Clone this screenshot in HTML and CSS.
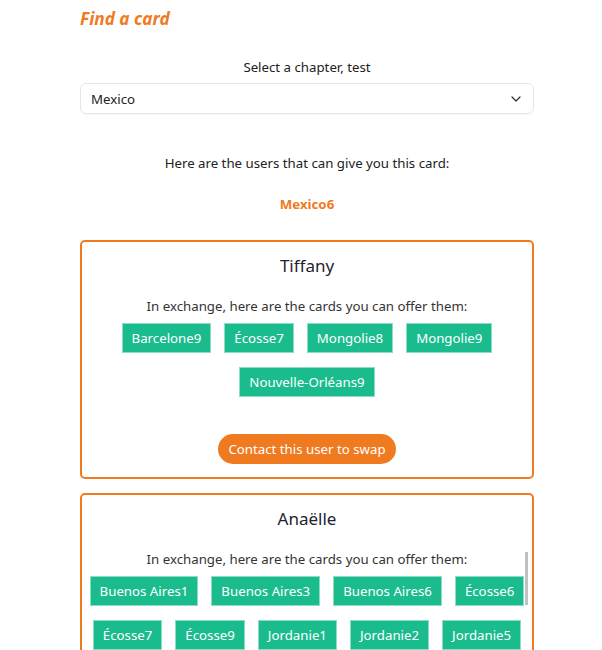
FILE: index.html
```html
<!DOCTYPE html>
<html lang="en">
<head>
<meta charset="utf-8">
<title>Find a card</title>
<link rel="stylesheet" href="styles.css">
</head>
<body>
<main class="page">
  <h1 class="title">Find a card</h1>
  <label class="label" for="chapter">Select a chapter, test</label>
  <div class="select">
    <span class="select-value">Mexico</span>
    <svg class="chevron" width="10" height="6" viewBox="0 0 10 6"><path d="M1 1l4 4 4-4" fill="none" stroke="#333" stroke-width="1.3" stroke-linecap="round" stroke-linejoin="round"/></svg>
  </div>
  <p class="intro">Here are the users that can give you this card:</p>
  <p class="card-name">Mexico6</p>

  <section class="user">
    <h2 class="user-name">Tiffany</h2>
    <div class="offers">
      <p class="offer-text">In exchange, here are the cards you can offer them:</p>
      <div class="chips">
        <span class="chip">Barcelone9</span>
        <span class="chip">Écosse7</span>
        <span class="chip">Mongolie8</span>
        <span class="chip">Mongolie9</span>
        <span class="chip">Nouvelle-Orléans9</span>
      </div>
    </div>
    <button class="contact">Contact this user to swap</button>
  </section>

  <section class="user">
    <h2 class="user-name">Anaëlle</h2>
    <div class="offers">
      <p class="offer-text">In exchange, here are the cards you can offer them:</p>
      <div class="chips">
        <span class="chip">Buenos Aires1</span>
        <span class="chip">Buenos Aires3</span>
        <span class="chip">Buenos Aires6</span>
        <span class="chip">Écosse6</span>
        <span class="chip">Écosse7</span>
        <span class="chip">Écosse9</span>
        <span class="chip">Jordanie1</span>
        <span class="chip">Jordanie2</span>
        <span class="chip">Jordanie5</span>
        <span class="chip">Jordanie7</span>
        <span class="chip">Mongolie2</span>
        <span class="chip">Mongolie4</span>
        <span class="chip">Mongolie8</span>
        <span class="chip">Mongolie9</span>
        <span class="chip">Nouvelle-Orléans2</span>
        <span class="chip">Nouvelle-Orléans9</span>
        <span class="chip">Tokyo3</span>
        <span class="chip">Tokyo5</span>
        <span class="chip">Tokyo8</span>
        <span class="chip">Venise1</span>
        <span class="chip">Venise4</span>
      </div>
    </div>
    <span class="scroll-thumb" aria-hidden="true"></span>
    <button class="contact">Contact this user to swap</button>
  </section>
</main>
</body>
</html>
```

FILE: styles.css
```css
* { box-sizing: border-box; }
html, body {
  margin: 0;
  padding: 0;
  background: #fff;
  font-family: "Noto Sans", "Open Sans", sans-serif;
  color: #222;
  overflow: hidden;
}
.page {
  width: 454px;
  margin-left: 80px;
  padding-top: 5px;
  display: flex;
  flex-direction: column;
}
.title {
  margin: 0;
  font-size: 17.2px;
  line-height: 27px;
  font-weight: 700;
  font-style: italic;
  color: #f07a1f;
}
.label {
  display: block;
  margin-top: 25px;
  text-align: center;
  font-size: 13.25px;
  line-height: 20px;
}
.select {
  margin-top: 6px;
  height: 31px;
  border: 1px solid #e6e6e6;
  border-radius: 6px;
  display: flex;
  align-items: center;
  justify-content: space-between;
  padding: 0 12px 0 10px;
  font-size: 13.25px;
  box-shadow: 0 1px 1px rgba(0,0,0,0.03);
}
.chevron { display: block; }
.intro {
  margin: 39px 0 0;
  text-align: center;
  font-size: 13.25px;
  line-height: 20px;
}
.card-name {
  margin: 21px 0 0;
  text-align: center;
  font-size: 13.25px;
  line-height: 20px;
  font-weight: 700;
  color: #f07a1f;
}
.user {
  position: relative;
  margin-top: 26px;
  border: 2px solid #f07a1f;
  border-radius: 5px;
  padding: 10px 0 13px;
  display: flex;
  flex-direction: column;
  align-items: center;
}
.user + .user { margin-top: 14px; }
.user-name {
  margin: 0;
  font-size: 17px;
  line-height: 27px;
  font-weight: 400;
  color: #1f2330;
}
.offers {
  margin-top: 17px;
  align-self: stretch;
  margin-left: 2px;
  margin-right: 2px;
  max-height: 120px;
  overflow-y: auto;
  scrollbar-width: none;
}
.offers::-webkit-scrollbar { width: 0; height: 0; }
.scroll-thumb {
  position: absolute;
  top: 57px;
  right: 4px;
  width: 3px;
  height: 53px;
  background: #c1c1c1;
}
.offer-text {
  margin: 0;
  text-align: center;
  font-size: 13.25px;
  line-height: 20px;
  color: #333;
}
.chips {
  margin-top: 7px;
  display: flex;
  flex-wrap: wrap;
  justify-content: center;
  gap: 14px 13px;
}
.chip {
  display: block;
  height: 30px;
  padding: 4px 9px;
  background: #1abc8e;
  border: 1px solid #8ddcc4;
  color: #fff;
  font-size: 13.25px;
  line-height: 20px;
  white-space: nowrap;
}
.contact {
  margin-top: 37px;
  height: 30px;
  padding: 0 10px;
  border: 0;
  border-radius: 15px;
  background: #f07a1f;
  color: #fff;
  font-family: inherit;
  font-size: 13.25px;
  line-height: 20px;
}
```
